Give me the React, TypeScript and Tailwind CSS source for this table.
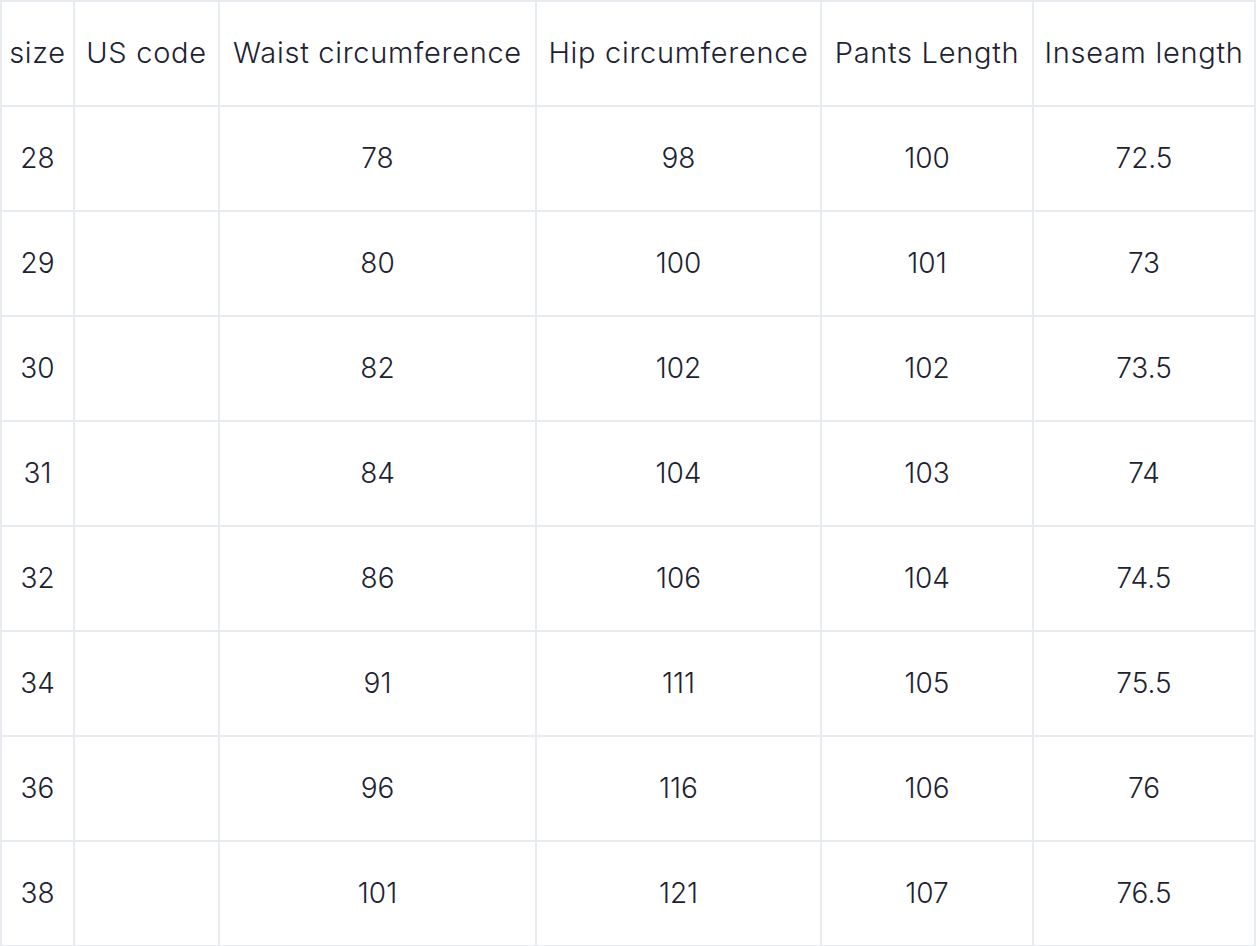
import React from "react";

const headers = ["size", "US code", "Waist circumference", "Hip circumference", "Pants Length", "Inseam length"];

const rows = [
  ["28", "", "78", "98", "100", "72.5"],
  ["29", "", "80", "100", "101", "73"],
  ["30", "", "82", "102", "102", "73.5"],
  ["31", "", "84", "104", "103", "74"],
  ["32", "", "86", "106", "104", "74.5"],
  ["34", "", "91", "111", "105", "75.5"],
  ["36", "", "96", "116", "106", "76"],
  ["38", "", "101", "121", "107", "76.5"],
];

export default function App() {
  return (
    <div className="w-[1256px] h-[946px] bg-white font-['Inter',sans-serif] font-light text-[#1c2232]">
      <div className="grid grid-cols-[71px_143px_315px_283px_210px_220px] auto-rows-[103px] gap-[2px] p-[2px] bg-[#e8ebf0] w-[1256px]">
        {headers.map((h) => (
          <div key={h} className="bg-white flex items-center justify-center text-[29px] tracking-[0.7px] whitespace-nowrap pb-[2px]">
            {h}
          </div>
        ))}
        {rows.map((r, ri) =>
          r.map((c, ci) => (
            <div key={`${ri}-${ci}`} className="bg-white flex items-center justify-center text-[28px] pb-[1px]">
              {c}
            </div>
          ))
        )}
      </div>
    </div>
  );
}
